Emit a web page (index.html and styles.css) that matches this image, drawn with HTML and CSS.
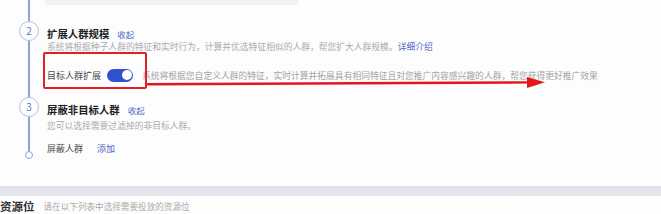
FILE: index.html
```html
<!DOCTYPE html>
<html lang="zh-CN">
<head>
<meta charset="utf-8">
<link rel="stylesheet" href="styles.css">
</head>
<body>
<div class="page">
  <div class="card">
    <div class="steps">
      <div class="lead">
        <div class="marker"><div class="line"></div></div>
        <div class="content"><div class="topbox"></div></div>
      </div>
      <div class="step step2">
        <div class="marker">
          <div class="circle">2</div>
          <div class="line"></div>
        </div>
        <div class="content">
          <div class="title"><span class="t">扩展人群规模</span><span class="link">收起</span></div>
          <div class="desc">系统将根据种子人群的特征和实时行为，计算并优选特征相似的人群，帮您扩大人群规模。<span class="link">详细介绍</span></div>
          <div class="opt">
            <span class="label">目标人群扩展</span>
            <span class="toggle"><span class="knob"></span></span>
            <span class="optdesc">系统将根据您自定义人群的特征，实时计算并拓展具有相同特征且对您推广内容感兴趣的人群，帮您获得更好推广效果</span>
            <div class="redbox"></div>
          </div>
        </div>
      </div>
      <div class="step step3">
        <div class="marker">
          <div class="circle">3</div>
          <div class="line"></div>
          <div class="dot"></div>
        </div>
        <div class="content">
          <div class="title"><span class="t">屏蔽非目标人群</span><span class="link">收起</span></div>
          <div class="desc desc3">您可以选择需要过滤掉的非目标人群。</div>
          <div class="row3"><span class="label">屏蔽人群</span><span class="link add">添加</span></div>
        </div>
      </div>
    </div>
    <svg class="arrow" width="661" height="186" viewBox="0 0 661 186">
      <path d="M148 84.2 L530 82.4" stroke="#e5161a" stroke-width="2.4" fill="none" stroke-linecap="round"/>
      <path d="M527 77 L545 82.3 L527 88 Z" fill="#e5161a"/>
    </svg>
  </div>
  <div class="band"></div>
  <div class="section2">
    <span class="h2">资源位</span>
    <span class="sdesc">请在以下列表中选择需要投放的资源位</span>
  </div>
</div>
</body>
</html>
```

FILE: styles.css
```css
html, body {
  margin: 0;
  padding: 0;
  background: #fdfdfd;
}
body {
  width: 661px;
  height: 214px;
  overflow: hidden;
  font-family: "Noto Sans CJK SC", "Noto Sans", sans-serif;
}
.page {
  width: 661px;
}
.card {
  position: relative;
  height: 186px;
  background: #fdfdfd;
}
.steps {
  padding-left: 11px;
}
.lead, .step {
  display: flex;
}
.marker {
  width: 36px;
  flex: none;
  display: flex;
  flex-direction: column;
  align-items: center;
}
.line {
  width: 2px;
  flex: 1;
  background: #95a0d6;
}
.lead {
  height: 21px;
}
.content {
  flex: 1;
  min-width: 0;
}
.topbox {
  margin-left: -2px;
  width: 253px;
  height: 5px;
  background: #f1f1f3;
  border-radius: 0 0 2px 2px;
}
.circle {
  width: 18px;
  height: 18px;
  border: 1px solid #b4bce2;
  border-radius: 50%;
  font-size: 10px;
  line-height: 18px;
  text-align: center;
  color: #6373c4;
  background: #fdfdfd;
  flex: none;
}
.step2 {
  height: 76px;
}
.step3 {
  height: 62px;
}
.dot {
  width: 6px;
  height: 6px;
  border: 1.5px solid #95a0d6;
  border-radius: 50%;
  background: #fff;
  flex: none;
}
.title {
  height: 20px;
  line-height: 20px;
  white-space: nowrap;
}
.title .t {
  font-size: 10.4px;
  font-weight: 700;
  color: #1e1e1e;
}
.title .link {
  font-size: 8.5px;
  margin-left: 8px;
}
.link {
  color: #5066c6;
}
.desc {
  height: 12px;
  line-height: 12px;
  font-size: 8.78px;
  color: #ababb0;
  white-space: nowrap;
}
.desc3 {
  height: 13px;
  line-height: 13px;
  margin-top: 2px;
}
.opt {
  position: relative;
  margin-top: 14px;
  height: 16px;
  display: flex;
  align-items: center;
  white-space: nowrap;
}
.label {
  font-size: 9px;
  color: #4a4a4a;
}
.toggle {
  margin-left: 6px;
  width: 26px;
  height: 13px;
  border-radius: 7px;
  background: #3152cf;
  display: flex;
  align-items: center;
  justify-content: flex-end;
  padding-right: 1.5px;
  box-sizing: border-box;
}
.knob {
  width: 10px;
  height: 10px;
  border-radius: 50%;
  background: #fff;
}
.optdesc {
  margin-left: 9px;
  font-size: 8.78px;
  color: #a3a3a8;
}
.redbox {
  position: absolute;
  left: -4px;
  top: -15px;
  width: 100px;
  height: 33px;
  border: 2px solid #e12126;
  border-radius: 2px;
}
.row3 {
  margin-top: 5px;
  height: 16px;
  line-height: 16px;
  white-space: nowrap;
}
.add {
  font-size: 9px;
  margin-left: 14px;
}
.arrow {
  position: absolute;
  left: 0;
  top: 0;
  pointer-events: none;
}
.band {
  height: 10px;
  background: linear-gradient(#dfe1e9, #e7e9ef);
}
.section2 {
  height: 16px;
  padding-top: 2px;
  background: #fdfdfd;
  display: flex;
  align-items: center;
  white-space: nowrap;
}
.h2 {
  margin-left: 0;
  font-size: 11.5px;
  line-height: 14px;
  font-weight: 700;
  color: #333;
}
.sdesc {
  margin-left: 9px;
  font-size: 8.6px;
  line-height: 12px;
  color: #aaa;
}
```
